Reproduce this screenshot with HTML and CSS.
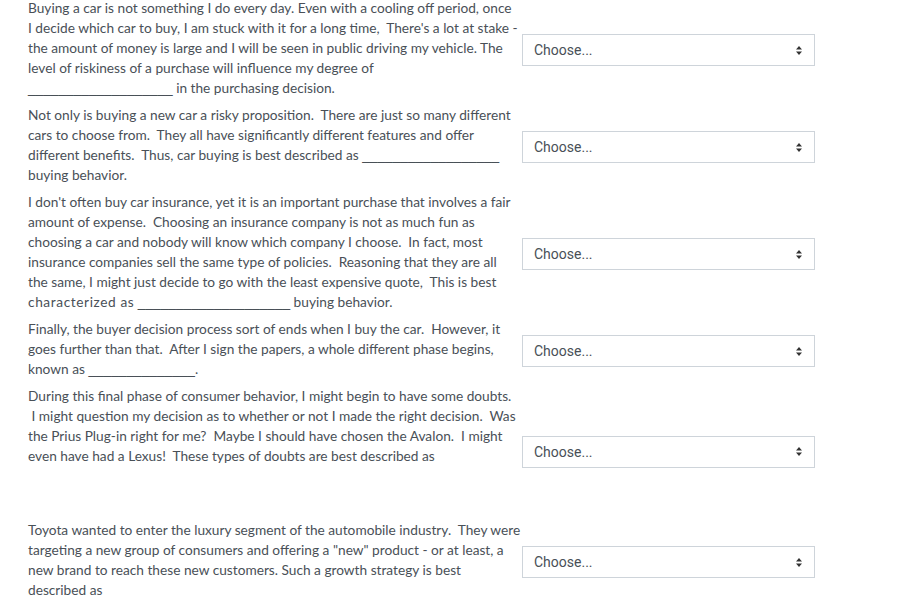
FILE: index.html
```html
<!DOCTYPE html>
<html lang="en">
<head>
<meta charset="utf-8">
<title>Match question</title>
<link rel="stylesheet" href="styles.css">
</head>
<body>
<div class="answer">
  <div class="row">
    <div class="text"><p>Buying a car is not something I do every day. Even with a cooling off period, once<br>I decide which car to buy, I am stuck with it for a long time,&nbsp; There's a lot at stake -<br>the amount of money is large and I will be seen in public driving my vehicle. The<br>level of riskiness of a purchase will influence my degree of<br><span class="blank">___________________</span> in the purchasing decision.</p></div>
    <div class="control"><select class="choice"><option>Choose...</option></select></div>
  </div>
  <div class="row">
    <div class="text"><p>Not only is buying a new car a risky proposition.&nbsp; There are just so many different<br>cars to choose from.&nbsp; They all have significantly different features and offer<br>different benefits.&nbsp; Thus, car buying is best described as <span class="blank">__________________</span><br>buying behavior.</p></div>
    <div class="control"><select class="choice"><option>Choose...</option></select></div>
  </div>
  <div class="row">
    <div class="text"><p>I don't often buy car insurance, yet it is an important purchase that involves a fair<br>amount of expense.&nbsp; Choosing an insurance company is not as much fun as<br>choosing a car and nobody will know which company I choose.&nbsp; In fact, most<br>insurance companies sell the same type of policies.&nbsp; Reasoning that they are all<br>the same, I might just decide to go with the least expensive quote,&nbsp; This is best<br><span class="wide">characterized as</span> <span class="blank">____________________</span> buying behavior.</p></div>
    <div class="control"><select class="choice"><option>Choose...</option></select></div>
  </div>
  <div class="row">
    <div class="text"><p>Finally, the buyer decision process sort of ends when I buy the car.&nbsp; However, it<br>goes further than that.&nbsp; After I sign the papers, a whole different phase begins,<br>known as <span class="blank">______________</span>.</p></div>
    <div class="control"><select class="choice"><option>Choose...</option></select></div>
  </div>
  <div class="row">
    <div class="text"><p>During this final phase of consumer behavior, I might begin to have some doubts.<br>&nbsp;I might question my decision as to whether or not I made the right decision.&nbsp; Was<br>the Prius Plug-in right for me?&nbsp; Maybe I should have chosen the Avalon.&nbsp; I might<br>even have had a Lexus!&nbsp; These types of doubts are best described as</p><p class="spacer">&nbsp;</p></div>
    <div class="control"><select class="choice"><option>Choose...</option></select></div>
  </div>
  <div class="row">
    <div class="text"><p>Toyota wanted to enter the luxury segment of the automobile industry.&nbsp; They were<br>targeting a new group of consumers and offering a "new" product - or at least, a<br>new brand to reach these new customers. Such a growth strategy is best<br>described as</p></div>
    <div class="control"><select class="choice"><option>Choose...</option></select></div>
  </div>
</div>
</body>
</html>
```

FILE: styles.css
```css
html, body {
  margin: 0;
  padding: 0;
  background: #ffffff;
}

body {
  font-family: Lato, "Open Sans", "Noto Sans", sans-serif;
  font-size: 13.7px;
  line-height: 20px;
  color: #495057;
}

.answer {
  display: flex;
  flex-direction: column;
  gap: 3px;
  margin-top: -2px;
  padding-left: 28px;
}

.row {
  display: flex;
  align-items: center;
}

.text {
  width: 494px;
  padding-bottom: 4px;
  white-space: nowrap;
}

.text p {
  margin: 0;
}

.text p.spacer {
  height: 47px;
  line-height: 47px;
}

.blank {
  font-family: "Liberation Sans", Arial, sans-serif;
  line-height: 10px;
}

.wide {
  letter-spacing: 0.6px;
}

.control {
  width: 293px;
}

.choice {
  -webkit-appearance: none;
  appearance: none;
  box-sizing: border-box;
  width: 293px;
  height: 32px;
  margin: 0;
  padding: 0 28px 0 11px;
  border: 1px solid #ced4da;
  border-radius: 0;
  background-color: #ffffff;
  background-image: url("data:image/svg+xml,%3Csvg xmlns='http://www.w3.org/2000/svg' width='6' height='9' viewBox='0 0 6 9'%3E%3Cpath d='M3 0L6 3.5H0Z M0 5.5H6L3 9Z' fill='%23333'/%3E%3C/svg%3E");
  background-repeat: no-repeat;
  background-position: right 12px center;
  background-size: 6px 9px;
  font-family: Roboto, "Liberation Sans", sans-serif;
  font-size: 14px;
  color: #495057;
}
```
